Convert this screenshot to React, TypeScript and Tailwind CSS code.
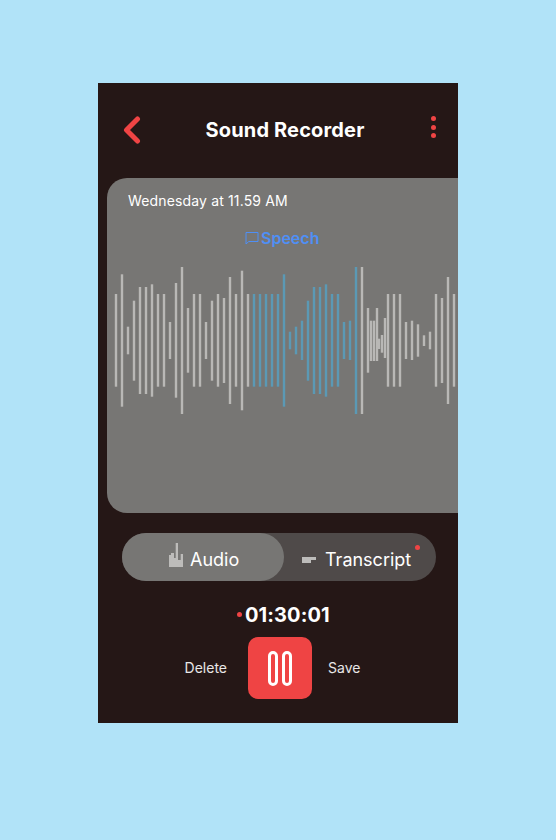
const FONT = "font-['Inter',sans-serif]";

// x, top, bottom, blue
const BARS: [number, number, number, boolean?][] = [
  [115.7, 294, 386.7],
  [121.7, 274.3, 406.7],
  [127.7, 326.7, 354.3],
  [133.7, 300.7, 380.7],
  [139.7, 287, 394],
  [145.7, 287, 394],
  [151.7, 284.3, 396.7],
  [157.7, 294, 386.7],
  [163.7, 294, 386.7],
  [169.7, 322, 359],
  [175.7, 283, 397.7],
  [181.7, 267, 414],
  [187.7, 308, 372.7],
  [193.7, 294, 386.7],
  [199.7, 294, 386.7],
  [205.7, 322, 359],
  [211.7, 300.7, 380.7],
  [217.7, 294, 386.7],
  [223.7, 298, 383],
  [229.7, 277, 404],
  [235.7, 294, 386.7],
  [241.7, 270.7, 410.3],
  [247.7, 294, 386.7],
  [253.7, 294, 386.7, true],
  [259.7, 294, 386.7, true],
  [265.7, 294, 386.7, true],
  [271.7, 294, 386.7, true],
  [277.7, 294, 386.7, true],
  [283.7, 274.3, 406.7, true],
  [290, 331.7, 349.3, true],
  [296, 326.7, 354.3, true],
  [302, 320.7, 360, true],
  [308, 300.7, 380.7, true],
  [314, 287, 394, true],
  [320, 287, 394, true],
  [326, 284.3, 396.7, true],
  [332, 294, 386.7, true],
  [338, 294, 386.7, true],
  [344, 322, 359, true],
  [350, 320.7, 360, true],
  [356, 267, 414, true],
  [362, 267, 414],
  [368, 308, 372.7],
  [371, 320.7, 361],
  [374, 320.7, 361],
  [377, 308, 361],
  [379, 338.7, 349],
  [382, 335, 352.7],
  [385, 318, 358],
  [388, 294, 386.7],
  [394, 294, 386.7],
  [400, 294, 386.7],
  [406, 322, 359],
  [412, 320.7, 360],
  [418, 324.3, 356.7],
  [424, 335.3, 346],
  [430, 331.7, 349.3],
  [436, 294, 386.7],
  [442, 298, 383],
  [448, 277, 404],
  [454, 294, 386.7],
];

function Waveform() {
  // svg starts at x=107, y=260 of the page
  return (
    <svg width="351" height="160" viewBox="107 260 351 160" className="block">
      {BARS.map(([x, top, bottom, blue]) => (
        <rect
          key={x}
          x={Math.round(x - 1) - 0.2}
          y={top}
          width="2.4"
          height={bottom - top}
          fill={blue ? "#5b99b5" : "#b9b8b6"}
        />
      ))}
    </svg>
  );
}

function BackIcon() {
  return (
    <svg width="18" height="28" viewBox="0 0 18 28" fill="none">
      <path d="M14.5 3 L3.5 14 L14.5 25" stroke="#ef4444" strokeWidth="5" strokeLinecap="round" strokeLinejoin="round" />
    </svg>
  );
}

function MoreIcon() {
  return (
    <div className="flex flex-col gap-[3.5px]">
      <span className="w-[5px] h-[5px] rounded-full bg-[#ef4444]" />
      <span className="w-[5px] h-[5px] rounded-full bg-[#ef4444]" />
      <span className="w-[5px] h-[5px] rounded-full bg-[#ef4444]" />
    </div>
  );
}

function SpeechIcon() {
  return (
    <svg width="14" height="14" viewBox="0 0 14 14" fill="none">
      <path d="M1 1.5 H13 V10.5 H3.8 L1 13 Z" stroke="#4f8ff5" strokeWidth="1" strokeLinejoin="round" />
    </svg>
  );
}

function AudioIcon() {
  return (
    <svg width="14" height="24" viewBox="0 0 14 24" fill="#bdbcba" className="mb-[4px]">
      <path d="M0 12 H2 V10 H5 V15 H6.7 V0 H9 V17 H11.7 V11 H14 V24 H0 Z" />
    </svg>
  );
}

function TranscriptIcon() {
  return (
    <svg width="14" height="6" viewBox="0 0 14 6" fill="#bdbcba" className="mt-[5px]">
      <path d="M0 0 H14 V3 H9 V6 H0 Z" />
    </svg>
  );
}

export default function App() {
  return (
    <div className={`w-[556px] h-[840px] bg-[#b1e3f8] pt-[83px] pl-[98px] ${FONT}`}>
      <div className="w-[360px] h-[640px] bg-[#251716] overflow-hidden flex flex-col">
        <div className="h-[95px] flex items-start justify-between pl-[25px] pr-[22px] pt-[33px]">
          <BackIcon />
          <h1 className="text-white font-bold text-[20px] leading-[28px] tracking-[0.15px] ml-[-2px]">Sound Recorder</h1>
          <MoreIcon />
        </div>

        <div className="ml-[9px] h-[335px] bg-[#777674] rounded-l-[20px] flex flex-col">
          <p className="text-white text-[14px] leading-[20px] tracking-[0.15px] pl-[21px] pt-[13px]">Wednesday at 11.59 AM</p>
          <div className="flex items-center gap-[2px] pl-[138px] pt-[17px] h-[36px]">
            <SpeechIcon />
            <span className="text-[#4f8ff5] font-semibold text-[16px] leading-[20px]">Speech</span>
          </div>
          <div className="mt-[13px]">
            <Waveform />
          </div>
        </div>

        <div className="relative mt-[20px] ml-[24px] w-[314px] h-[48px] rounded-full bg-[#4f4a49] flex">
          <div className="w-[162px] h-full rounded-full bg-[#777674] flex items-center gap-[7px] pl-[47px]">
            <AudioIcon />
            <span className="text-white text-[18px] leading-[24px] mt-[6px]">Audio</span>
          </div>
          <div className="flex-1 flex items-center gap-[9px] pl-[18px]">
            <TranscriptIcon />
            <span className="text-white text-[18px] leading-[24px] mt-[6px]">Transcript</span>
          </div>
          <span className="absolute right-[16px] top-[12px] w-[5px] h-[5px] rounded-full bg-[#ef4444]" />
        </div>

        <div className="relative mt-[20px] pl-[147px]">
          <span className="text-white font-bold text-[20px] leading-[28px] tracking-[0.1px]">01:30:01</span>
          <span className="absolute left-[139px] top-[11px] w-[5px] h-[5px] rounded-full bg-[#ef4444]" />
        </div>

        <div className="mt-[8px] flex items-center">
          <span className="w-[150px] pr-[21px] text-right text-white/90 text-[14px] leading-[20px]">Delete</span>
          <div className="w-[64px] h-[62px] rounded-[10px] bg-[#ef4444] flex items-center justify-center gap-[4px]">
            <span className="w-[10px] h-[35px] rounded-full border-[3px] border-white" />
            <span className="w-[10px] h-[35px] rounded-full border-[3px] border-white" />
          </div>
          <span className="pl-[16px] text-white/90 text-[14px] leading-[20px]">Save</span>
        </div>
      </div>
    </div>
  );
}
